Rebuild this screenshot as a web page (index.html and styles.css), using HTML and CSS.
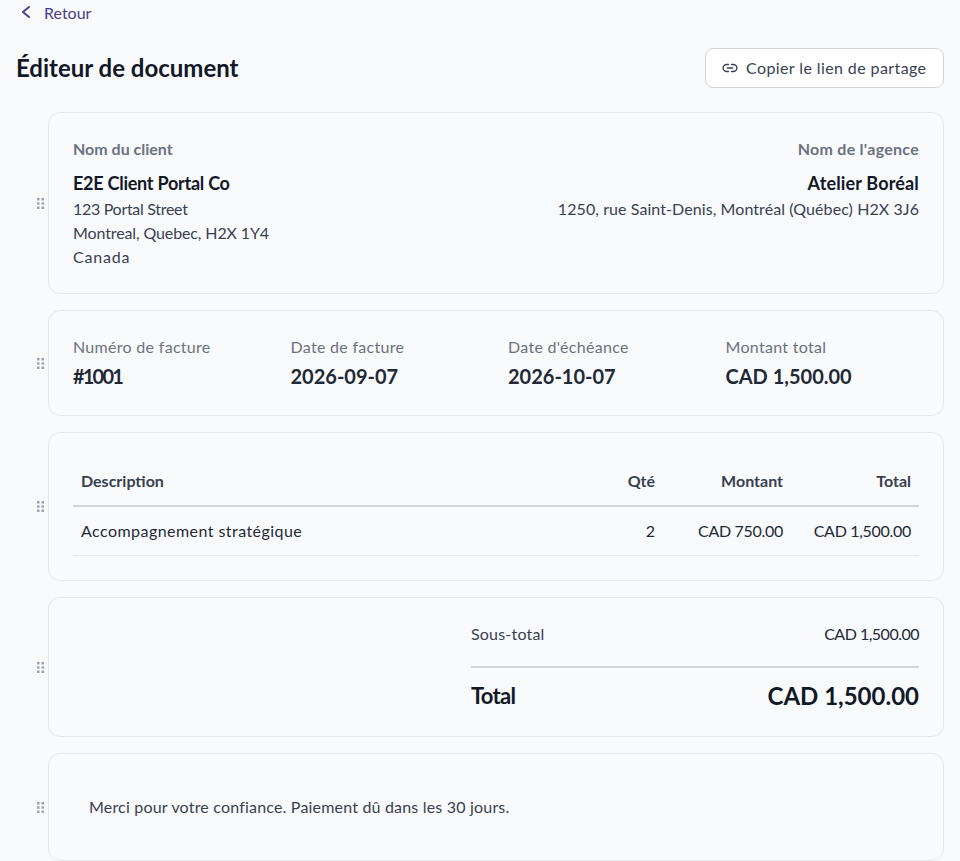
FILE: index.html
```html
<!DOCTYPE html>
<html lang="fr">
<head>
<meta charset="utf-8">
<title>Éditeur de document</title>
<link rel="stylesheet" href="styles.css">
</head>
<body>
<a class="back" href="#"><svg class="back-icon" viewBox="0 0 16 16" width="16" height="16"><path d="M11 2 5 7l6 5" fill="none" stroke="currentColor" stroke-width="2" stroke-linecap="round" stroke-linejoin="round"/></svg><span>Retour</span></a>
<header class="head">
  <h1>Éditeur de document</h1>
  <button class="share"><svg viewBox="0 0 16 16" width="16" height="16"><path d="M6.500 3.500H4.800a3.700 3.500 0 0 0 0 7h1.700M9.500 3.500h1.700a3.700 3.500 0 0 1 0 7H9.500M5.300 7h5.400" transform="translate(0 1)" fill="none" stroke="currentColor" stroke-width="1.400" stroke-linecap="round"/></svg>Copier le lien de partage</button>
</header>
<main class="blocks">
  <section class="block">
    <div class="handle"><svg viewBox="0 0 7 11" width="7" height="11"><g class="dots"><rect x="0" y="0" width="2.500" height="2.500"/><rect x="4.500" y="0" width="2.500" height="2.500"/><rect x="0" y="4.250" width="2.500" height="2.500"/><rect x="4.500" y="4.250" width="2.500" height="2.500"/><rect x="0" y="8.500" width="2.500" height="2.500"/><rect x="4.500" y="8.500" width="2.500" height="2.500"/></g></svg></div>
    <div class="card parties">
      <div>
        <div class="label">Nom du client</div>
        <div class="name">E2E Client Portal Co</div>
        <div class="addr street">123 Portal Street</div>
        <div class="addr city">Montreal, Quebec, H2X 1Y4</div>
        <div class="addr wide">Canada</div>
      </div>
      <div class="right">
        <div class="label agency">Nom de l'agence</div>
        <div class="name loose">Atelier Boréal</div>
        <div class="addr agency-addr">1250, rue Saint-Denis, Montréal (Québec) H2X 3J6</div>
      </div>
    </div>
  </section>
  <section class="block">
    <div class="handle"><svg viewBox="0 0 7 11" width="7" height="11"><g class="dots"><rect x="0" y="0" width="2.500" height="2.500"/><rect x="4.500" y="0" width="2.500" height="2.500"/><rect x="0" y="4.250" width="2.500" height="2.500"/><rect x="4.500" y="4.250" width="2.500" height="2.500"/><rect x="0" y="8.500" width="2.500" height="2.500"/><rect x="4.500" y="8.500" width="2.500" height="2.500"/></g></svg></div>
    <div class="card meta">
      <div><div class="meta-label">Numéro de facture</div><div class="meta-value short">#1001</div></div>
      <div><div class="meta-label">Date de facture</div><div class="meta-value">2026-09-07</div></div>
      <div><div class="meta-label">Date d'échéance</div><div class="meta-value">2026-10-07</div></div>
      <div><div class="meta-label">Montant total</div><div class="meta-value">CAD 1,500.00</div></div>
    </div>
  </section>
  <section class="block">
    <div class="handle"><svg viewBox="0 0 7 11" width="7" height="11"><g class="dots"><rect x="0" y="0" width="2.500" height="2.500"/><rect x="4.500" y="0" width="2.500" height="2.500"/><rect x="0" y="4.250" width="2.500" height="2.500"/><rect x="4.500" y="4.250" width="2.500" height="2.500"/><rect x="0" y="8.500" width="2.500" height="2.500"/><rect x="4.500" y="8.500" width="2.500" height="2.500"/></g></svg></div>
    <div class="card">
      <table class="items">
        <thead><tr><th>Description</th><th class="num qty">Qté</th><th class="num col">Montant</th><th class="num col">Total</th></tr></thead>
        <tbody><tr><td class="desc">Accompagnement stratégique</td><td class="num">2</td><td class="num money">CAD 750.00</td><td class="num money">CAD 1,500.00</td></tr></tbody>
      </table>
    </div>
  </section>
  <section class="block">
    <div class="handle"><svg viewBox="0 0 7 11" width="7" height="11"><g class="dots"><rect x="0" y="0" width="2.500" height="2.500"/><rect x="4.500" y="0" width="2.500" height="2.500"/><rect x="0" y="4.250" width="2.500" height="2.500"/><rect x="4.500" y="4.250" width="2.500" height="2.500"/><rect x="0" y="8.500" width="2.500" height="2.500"/><rect x="4.500" y="8.500" width="2.500" height="2.500"/></g></svg></div>
    <div class="card totals-card">
      <div class="totals">
        <div class="sub"><span class="sub-label">Sous-total</span><span class="sub-value">CAD 1,500.00</span></div>
        <div class="grand"><span class="grand-label">Total</span><span>CAD 1,500.00</span></div>
      </div>
    </div>
  </section>
  <section class="block">
    <div class="handle"><svg viewBox="0 0 7 11" width="7" height="11"><g class="dots"><rect x="0" y="0" width="2.500" height="2.500"/><rect x="4.500" y="0" width="2.500" height="2.500"/><rect x="0" y="4.250" width="2.500" height="2.500"/><rect x="4.500" y="4.250" width="2.500" height="2.500"/><rect x="0" y="8.500" width="2.500" height="2.500"/><rect x="4.500" y="8.500" width="2.500" height="2.500"/></g></svg></div>
    <div class="card"><p class="note">Merci pour votre confiance. Paiement dû dans les 30 jours.</p></div>
  </section>
</main>
</body>
</html>
```
FILE: styles.css
```css
* { box-sizing: border-box; }
html, body { margin: 0; padding: 0; }
body {
  background: #f9fafb;
  font-family: "Lato", "Noto Sans", sans-serif;
  font-size: 16px;
  line-height: 24px;
  color: #111827;
  padding: 0 16px;
  height: 861px;
  overflow: hidden;
}
.back {
  display: flex;
  align-items: center;
  gap: 10px;
  height: 26px;
  padding-left: 2px;
  color: #4c3d8f;
  text-decoration: none;
}
.back-icon { display: block; }
.head {
  display: flex;
  justify-content: space-between;
  align-items: center;
  margin-top: 22px;
  height: 40px;
}
h1 { margin: 0; font-size: 24px; font-weight: 700; line-height: 32px; color: #111827; }
.share {
  display: flex;
  align-items: center;
  gap: 8px;
  width: 239px;
  height: 40px;
  padding: 0 16px;
  background: #fff;
  border: 1px solid #d1d5db;
  border-radius: 8px;
  font: inherit;
  letter-spacing: 0.4px;
  color: #374151;
}
.blocks { display: flex; flex-direction: column; gap: 16px; margin-top: 24px; }
.block { display: flex; align-items: center; }
.handle { width: 32px; flex: none; display: flex; justify-content: flex-end; padding-right: 4.500px; }
.handle svg { display: block; }
.dots rect { fill: #9ca3af; }
.card {
  flex: 1;
  min-width: 0;
  border: 1px solid #e5e7eb;
  border-radius: 12px;
  padding: 24px;
  background: #f9fafb;
}
.parties { display: flex; justify-content: space-between; }
.right { text-align: right; }
.label { font-weight: 700; color: #6b7280; margin-bottom: 8px; }
.label.agency { letter-spacing: 0.27px; }
.name { font-size: 18px; line-height: 28px; font-weight: 700; color: #111827; letter-spacing: -0.25px; }
.name.loose { letter-spacing: 0.15px; }
.addr { color: #374151; }
.addr.street { letter-spacing: -0.3px; }
.addr.city { letter-spacing: -0.12px; }
.addr.wide { letter-spacing: 0.8px; }
.addr.agency-addr { letter-spacing: 0.08px; }
.meta { display: grid; grid-template-columns: repeat(4, 1fr); gap: 24px; }
.meta-label { color: #6b7280; margin-bottom: 4px; letter-spacing: 0.3px; }
.meta-value { font-size: 20px; line-height: 28px; font-weight: 700; color: #1f2937; margin-top: -1px; margin-bottom: 1px; }
.meta-value.short { letter-spacing: -1.8px; }
.items { width: 100%; border-collapse: collapse; }
.items th, .items td { padding: 12px 8px; text-align: left; }
.items th { font-weight: 700; color: #374151; border-bottom: 2px solid #d1d5db; }
.items td { color: #1f2937; border-bottom: 1px solid #e5e7eb; }
.items .num { text-align: right; }
.items .col { width: 128px; }
.items .qty { width: 80px; }
.items .desc { letter-spacing: 0.45px; }
.items .money { letter-spacing: -0.3px; }
.totals { width: 448px; margin-left: auto; }
.sub { display: flex; justify-content: space-between; padding-bottom: 20px; border-bottom: 2px solid #d1d5db; }
.sub-label { color: #374151; letter-spacing: 0.2px; }
.sub-value { color: #1f2937; letter-spacing: -0.5px; }
.grand {
  display: flex;
  justify-content: space-between;
  margin-top: 12px;
  font-size: 24px;
  line-height: 32px;
  font-weight: 700;
  color: #111827;
}
.grand-label { font-size: 22px; letter-spacing: -0.7px; }
.note { margin: 0; padding: 17px 16px; color: #374151; letter-spacing: 0.19px; }
```
